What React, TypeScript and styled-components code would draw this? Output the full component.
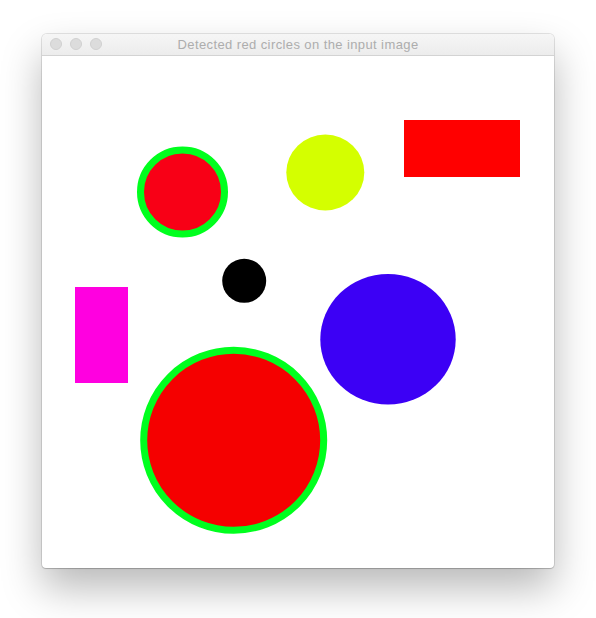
import React from "react";
import styled, { createGlobalStyle } from "styled-components";

const Global = createGlobalStyle`
  html, body { margin: 0; padding: 0; background: #ffffff; }
  body { font-family: "Liberation Sans", Arial, sans-serif; }
`;

const Page = styled.div`
  width: 596px;
  height: 618px;
  padding: 34px 0 0 42px;
  box-sizing: border-box;
`;

const Window = styled.div`
  width: 512px;
  display: flex;
  flex-direction: column;
  border-radius: 5px 5px 4px 4px;
  background: #ffffff;
  box-shadow: 0 0 0 1px rgba(0, 0, 0, 0.1), 0 1px 1px rgba(0, 0, 0, 0.15),
    0 20px 40px rgba(0, 0, 0, 0.28);
  overflow: hidden;
`;

const TitleBar = styled.div`
  height: 21px;
  display: flex;
  align-items: center;
  position: relative;
  background: linear-gradient(#f6f6f6, #ececec);
  border-bottom: 1px solid #d3d3d3;
`;

const Lights = styled.div`
  display: flex;
  gap: 8px;
  padding-left: 8px;
  position: absolute;
  left: 0;
  top: 4px;
`;

const Light = styled.span`
  width: 12px;
  height: 12px;
  border-radius: 50%;
  box-sizing: border-box;
  background: #dcdcdc;
  border: 1px solid #d0d0d0;
`;

const Title = styled.div`
  flex: 1;
  text-align: center;
  font-family: "Helvetica Neue", "Liberation Sans", Arial, sans-serif;
  font-size: 13px;
  color: #adadad;
  line-height: 21px;
  letter-spacing: 0.4px;
`;

const Canvas = styled.svg`
  display: block;
  width: 512px;
  height: 512px;
`;

export default function App() {
  return (
    <>
      <Global />
      <Page>
        <Window>
          <TitleBar>
            <Lights>
              <Light />
              <Light />
              <Light />
            </Lights>
            <Title>Detected red circles on the input image</Title>
          </TitleBar>
          <Canvas viewBox="0 0 512 512">
            <rect x="362" y="64" width="116" height="57" fill="#ff0000" />
            <ellipse cx="283.3" cy="116.5" rx="39" ry="38" fill="#d4ff00" />
            <circle cx="140.5" cy="136" r="42" fill="#f80016" stroke="#00ff1e" strokeWidth="7" />
            <circle cx="202.2" cy="224.8" r="22" fill="#000000" />
            <rect x="33" y="231" width="53" height="96" fill="#ff00e0" />
            <ellipse cx="346" cy="283.2" rx="67.7" ry="65.2" fill="#3c00f5" />
            <circle cx="191.7" cy="384.3" r="90" fill="#f50000" stroke="#00ff1e" strokeWidth="7" />
          </Canvas>
        </Window>
      </Page>
    </>
  );
}
